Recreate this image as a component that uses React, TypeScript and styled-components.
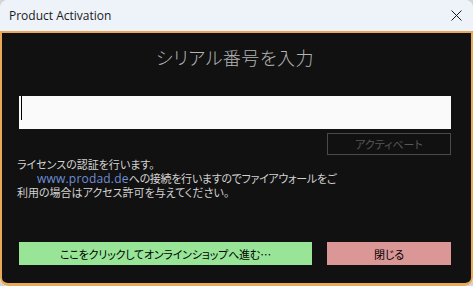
import styled, { createGlobalStyle } from "styled-components";

const GlobalStyle = createGlobalStyle`
    html, body {
        margin: 0;
        padding: 0;
        background: #d4d4d4;
    }
`;

const jp = `"Noto Sans CJK JP", "Noto Sans", sans-serif`;

const Window = styled.div`
    width: 473px;
    height: 286px;
    display: flex;
    flex-direction: column;
    border-radius: 8px;
    overflow: hidden;
    background: #eef2f9;
`;

const TitleBar = styled.header`
    height: 31px;
    flex-shrink: 0;
    display: flex;
    align-items: center;
    justify-content: space-between;
    padding: 0 9px 0 9px;
    background: #eef2f9;
    font-family: "Open Sans", "Liberation Sans", sans-serif;
    font-size: 12px;
    color: #1a1a1a;
`;

const CloseButton = styled.button`
    width: 14px;
    height: 14px;
    padding: 0;
    border: none;
    background: none;
    display: flex;
    align-items: center;
    justify-content: center;
    margin-right: 1px;
`;

const Body = styled.main`
    flex: 1;
    display: flex;
    flex-direction: column;
    background: #111111;
    border: 2px solid #e8aa58;
    border-bottom-width: 3px;
    border-radius: 0 0 8px 8px;
    padding: 0 20px 0 17px;
    font-family: ${jp};
    font-feature-settings: "palt";
`;

const Heading = styled.h1`
    margin: 11px 0 0;
    font-size: 18px;
    line-height: 26px;
    font-weight: 300;
    color: #b4b4b4;
    text-align: center;
    letter-spacing: 0.5px;
`;

const InputWrap = styled.div`
    position: relative;
    margin-top: 26px;
`;

const SerialInput = styled.input`
    display: block;
    width: 100%;
    height: 33px;
    box-sizing: border-box;
    border: none;
    outline: none;
    background: #fafafa;
    padding: 0 2px;
    font-size: 16px;
    caret-color: transparent;
`;

const Caret = styled.span`
    position: absolute;
    left: 2px;
    top: 0;
    width: 1px;
    height: 24px;
    background: #000;
`;

const ActivateRow = styled.div`
    display: flex;
    justify-content: flex-end;
    margin-top: 4px;
`;

const ActivateButton = styled.button`
    width: 124px;
    height: 22px;
    box-sizing: border-box;
    border: 1px solid #4a4a4a;
    background: transparent;
    color: #575757;
    font-family: ${jp};
    font-feature-settings: "palt";
    font-size: 11px;
    padding: 0;
`;

const Info = styled.div`
    margin: 2px 0 0 -2px;
    font-size: 11px;
    line-height: 14px;
    color: #d2d2d2;
`;

const Line = styled.div<{ $indent?: boolean }>`
    height: 14px;
    padding-left: ${(p) => (p.$indent ? 20 : 0)}px;
    letter-spacing: ${(p) => (p.$indent ? -0.3 : 0)}px;
    white-space: nowrap;
`;

const Link = styled.span`
    font-family: "Open Sans", "Noto Sans", sans-serif;
    font-size: 12px;
    letter-spacing: 0.2px;
    color: #6f8fd6;
`;

const ButtonRow = styled.div`
    display: flex;
    gap: 15px;
    margin-top: auto;
    margin-bottom: 18px;
`;

const ActionButton = styled.button<{ $tone: "green" | "red"; $width: number }>`
    width: ${(p) => p.$width}px;
    height: 23px;
    border: none;
    padding: 0;
    background: ${(p) => (p.$tone === "green" ? "#98e598" : "#db9696")};
    color: #000;
    font-family: ${jp};
    font-feature-settings: "palt";
    font-size: 11px;
    letter-spacing: -0.2px;
`;

function App() {
    return (
        <>
            <GlobalStyle />
            <Window>
                <TitleBar>
                    <span>Product Activation</span>
                    <CloseButton aria-label="close">
                        <svg width="11" height="11" viewBox="0 0 11 11">
                            <path d="M0.5 0.5 L10.5 10.5 M10.5 0.5 L0.5 10.5" stroke="#1a1a1a" strokeWidth="1" fill="none" />
                        </svg>
                    </CloseButton>
                </TitleBar>
                <Body>
                    <Heading>シリアル番号を入力</Heading>
                    <InputWrap>
                        <SerialInput />
                        <Caret />
                    </InputWrap>
                    <ActivateRow>
                        <ActivateButton>アクティベート</ActivateButton>
                    </ActivateRow>
                    <Info>
                        <Line>ライセンスの認証を行います。</Line>
                        <Line $indent>
                            <Link>www.prodad.de</Link>への接続を行いますのでファイアウォールをご
                        </Line>
                        <Line>利用の場合はアクセス許可を与えてください。</Line>
                    </Info>
                    <ButtonRow>
                        <ActionButton $tone="green" $width={293}>ここをクリックしてオンラインショップへ進む…</ActionButton>
                        <ActionButton $tone="red" $width={124}>閉じる</ActionButton>
                    </ButtonRow>
                </Body>
            </Window>
        </>
    );
}

export default App;
